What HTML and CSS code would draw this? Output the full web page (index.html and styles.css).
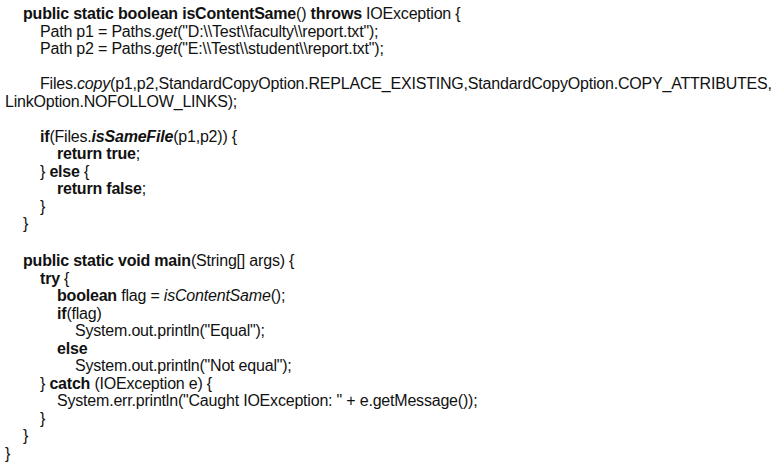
FILE: index.html
```html
<!DOCTYPE html>
<html>
<head>
<meta charset="utf-8">
<link rel="stylesheet" href="styles.css">
</head>
<body>
<div class="code">
  <div class="ln i1"><b>public static boolean isContentSame</b>() <b>throws</b> IOException {</div>
  <div class="ln i2">Path p1 = Paths.<i>get</i>("D:\\Test\\faculty\\report.txt");</div>
  <div class="ln i2">Path p2 = Paths.<i>get</i>("E:\\Test\\student\\report.txt");</div>
  <div class="ln blank"></div>
  <div class="ln i2">Files.<i>copy</i>(p1,p2,StandardCopyOption.REPLACE_EXISTING,StandardCopyOption.COPY_ATTRIBUTES,</div>
  <div class="ln i0">LinkOption.NOFOLLOW_LINKS);</div>
  <div class="ln blank"></div>
  <div class="ln i2"><b>if</b>(Files.<b><i>isSameFile</i></b>(p1,p2)) {</div>
  <div class="ln i3"><b>return true</b>;</div>
  <div class="ln i2">} <b>else</b> {</div>
  <div class="ln i3"><b>return false</b>;</div>
  <div class="ln i2">}</div>
  <div class="ln i1">}</div>
  <div class="ln blank"></div>
  <div class="ln i1 gap"><b>public static void main</b>(String[] args) {</div>
  <div class="ln i2"><b>try</b> {</div>
  <div class="ln i3"><b>boolean</b> flag = <i>isContentSame</i>();</div>
  <div class="ln i3"><b>if</b>(flag)</div>
  <div class="ln i4">System.out.println("Equal");</div>
  <div class="ln i3"><b>else</b></div>
  <div class="ln i4">System.out.println("Not equal");</div>
  <div class="ln i2">} <b>catch</b> (IOException e) {</div>
  <div class="ln i3">System.err.println("Caught IOException: " + e.getMessage());</div>
  <div class="ln i2">}</div>
  <div class="ln i1">}</div>
  <div class="ln i0">}</div>
</div>
</body>
</html>
```
FILE: styles.css
```css
html, body {
  margin: 0;
  padding: 0;
  background: #ffffff;
}
.code {
  padding: 5px 0 0 5px;
  font-family: "Liberation Sans", Arial, sans-serif;
  font-size: 16px;
  line-height: 17.5px;
  color: #111111;
  letter-spacing: -0.2px;
}
.ln {
  white-space: pre;
  height: 17.5px;
}
.blank { height: 17.5px; }
.gap { margin-top: 2px; }
.i0 { padding-left: 0; }
.i1 { padding-left: 18px; }
.i2 { padding-left: 35px; }
.i3 { padding-left: 52px; }
.i4 { padding-left: 70px; }
b { font-weight: bold; }
i { font-style: italic; }
```
